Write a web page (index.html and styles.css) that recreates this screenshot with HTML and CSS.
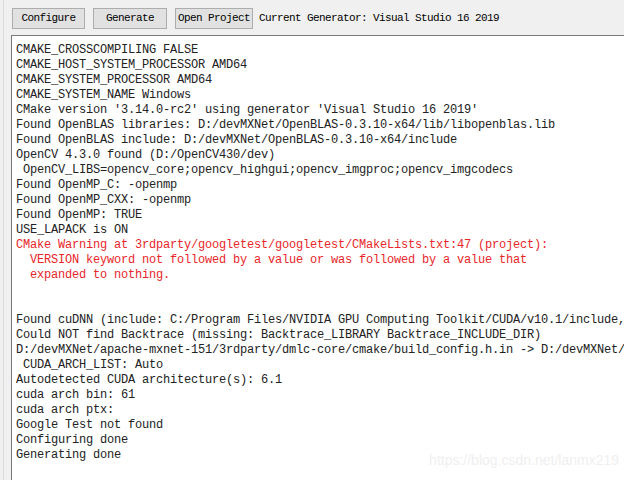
FILE: index.html
```html
<!DOCTYPE html>
<html lang="en">
<head>
  <meta charset="UTF-8">
  <title>CMake</title>
  <link rel="stylesheet" href="styles.css">
</head>
<body>
  <div class="window">
    <div class="toolbar">
      <button class="btn btn-configure">Configure</button>
      <button class="btn btn-generate">Generate</button>
      <button class="btn btn-open">Open Project</button>
      <span class="generator">Current Generator: Visual Studio 16 2019</span>
    </div>
    <div class="output">
      <div class="line">CMAKE_CROSSCOMPILING FALSE</div>
      <div class="line">CMAKE_HOST_SYSTEM_PROCESSOR AMD64</div>
      <div class="line">CMAKE_SYSTEM_PROCESSOR AMD64</div>
      <div class="line">CMAKE_SYSTEM_NAME Windows</div>
      <div class="line">CMake version '3.14.0-rc2' using generator 'Visual Studio 16 2019'</div>
      <div class="line">Found OpenBLAS libraries: D:/devMXNet/OpenBLAS-0.3.10-x64/lib/libopenblas.lib</div>
      <div class="line">Found OpenBLAS include: D:/devMXNet/OpenBLAS-0.3.10-x64/include</div>
      <div class="line">OpenCV 4.3.0 found (D:/OpenCV430/dev)</div>
      <div class="line"> OpenCV_LIBS=opencv_core;opencv_highgui;opencv_imgproc;opencv_imgcodecs</div>
      <div class="line">Found OpenMP_C: -openmp</div>
      <div class="line">Found OpenMP_CXX: -openmp</div>
      <div class="line">Found OpenMP: TRUE</div>
      <div class="line">USE_LAPACK is ON</div>
      <div class="line warn">CMake Warning at 3rdparty/googletest/googletest/CMakeLists.txt:47 (project):</div>
      <div class="line warn">  VERSION keyword not followed by a value or was followed by a value that</div>
      <div class="line warn">  expanded to nothing.</div>
      <div class="line"> </div>
      <div class="line"> </div>
      <div class="line">Found cuDNN (include: C:/Program Files/NVIDIA GPU Computing Toolkit/CUDA/v10.1/include,</div>
      <div class="line">Could NOT find Backtrace (missing: Backtrace_LIBRARY Backtrace_INCLUDE_DIR)</div>
      <div class="line">D:/devMXNet/apache-mxnet-151/3rdparty/dmlc-core/cmake/build_config.h.in -&gt; D:/devMXNet/</div>
      <div class="line"> CUDA_ARCH_LIST: Auto</div>
      <div class="line">Autodetected CUDA architecture(s): 6.1</div>
      <div class="line">cuda arch bin: 61</div>
      <div class="line">cuda arch ptx:</div>
      <div class="line">Google Test not found</div>
      <div class="line">Configuring done</div>
      <div class="line">Generating done</div>
    </div>
    <div class="watermark">https://blog.csdn.net/lanmx219</div>
  </div>
</body>
</html>
```

FILE: styles.css
```css
body {
  margin: 0;
  background: #f0f0f0;
  overflow: hidden;
}
.window {
  position: relative;
  width: 621px;
  height: 480px;
  border-left: 1px solid #dadada;
  margin-left: 3px;
  background: #f0f0f0;
  overflow: hidden;
}
.toolbar {
  display: flex;
  align-items: center;
  height: 35px;
  padding-left: 8px;
  gap: 8px;
  font-family: "Liberation Mono", monospace;
  font-size: 11px;
  letter-spacing: -0.6px;
  color: #000;
}
.btn {
  height: 21px;
  margin-top: 1px;
  padding: 0;
  background: #e1e1e1;
  border: 1px solid #adadad;
  font-family: inherit;
  font-size: inherit;
  letter-spacing: inherit;
  color: #000;
}
.btn-configure { width: 73px; }
.btn-generate { width: 74px; }
.btn-open { width: 78px; }
.generator {
  margin-left: -2px;
  margin-top: 1px;
}
.output {
  margin-left: 7px;
  height: 445px;
  background: #fff;
  border-top: 1px solid #7a7a7a;
  border-left: 1px solid #7a7a7a;
  padding: 7px 0 0 4px;
  font-family: "Liberation Mono", monospace;
  font-size: 12px;
  letter-spacing: -0.2px;
  color: #222;
  overflow: hidden;
}
.line {
  height: 15px;
  line-height: 15px;
  white-space: pre;
}
.warn {
  color: #e8262a;
}
.watermark {
  position: absolute;
  right: 6px;
  bottom: 12px;
  font-family: "Liberation Sans", sans-serif;
  font-size: 14px;
  color: #efefef;
}
```
